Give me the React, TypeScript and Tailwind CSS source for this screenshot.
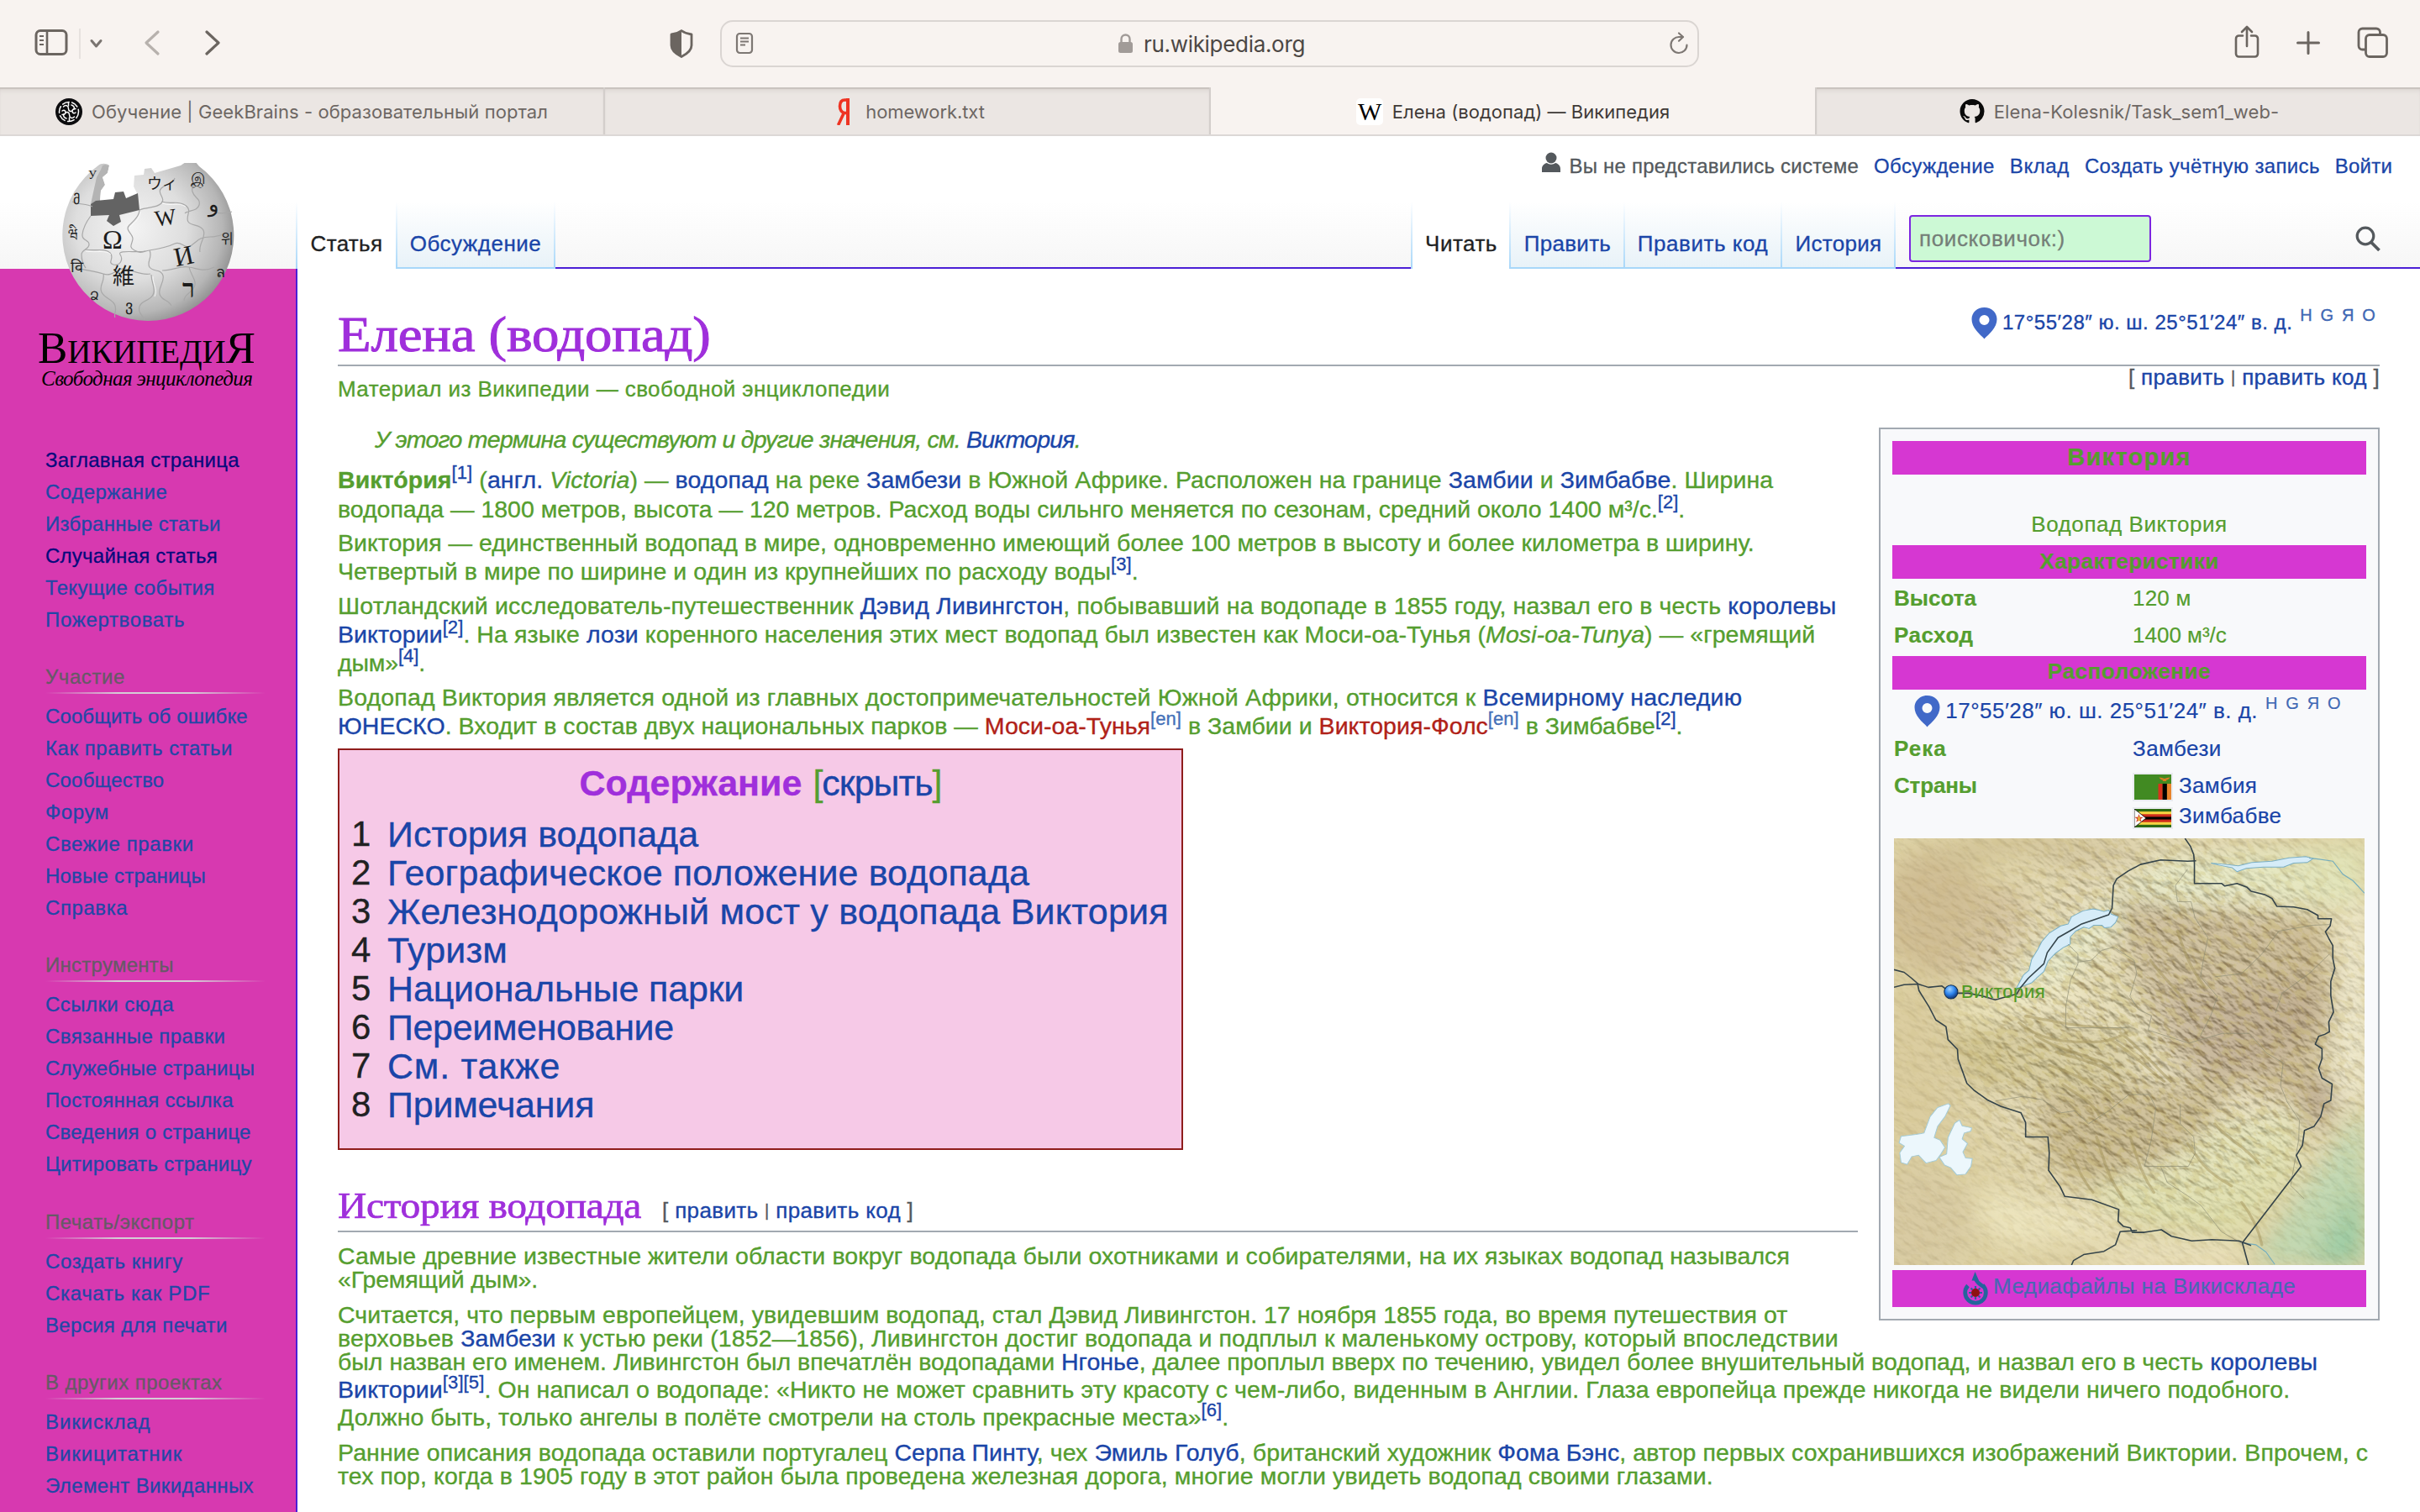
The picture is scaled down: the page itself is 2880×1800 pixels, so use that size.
import React, { useLayoutEffect, useRef } from "react";

/* Text run that spreads its letters so that it takes exactly `w` pixels. */
function Fit({ w, className = "", children }: { w: number; className?: string; children: React.ReactNode }) {
  const ref = useRef<HTMLSpanElement>(null);
  useLayoutEffect(() => {
    const el = ref.current;
    if (!el) return;
    el.style.letterSpacing = "0px";
    const natural = el.offsetWidth;
    const n = (el.textContent || " ").length;
    el.style.letterSpacing = (w - natural) / n + "px";
  }, [w]);
  return (
    <span ref={ref} className={"inline-block whitespace-pre align-top " + className}>
      {children}
    </span>
  );
}

const A = ({ children }: { children: React.ReactNode }) => <a className="text-[#1a45a8]">{children}</a>;
const Red = ({ children }: { children: React.ReactNode }) => <a className="text-[#b02118]">{children}</a>;
const Sup = ({ children }: { children: React.ReactNode }) => (
  <sup className="relative -top-[0.5em] text-[22px] text-[#1a45a8] align-baseline leading-[0]">{children}</sup>
);
const SupEn = () => (
  <sup className="relative -top-[0.5em] text-[22px] text-[#4470b8] align-baseline leading-[0]">[en]</sup>
);

function L({ w, children }: { w: number; children: React.ReactNode }) {
  return (
    <div className="whitespace-nowrap">
      <Fit w={w}>{children}</Fit>
    </div>
  );
}

/* ---------- browser chrome ---------- */

function Toolbar() {
  return (
    <div className="flex h-[104px] items-center bg-[#f8f3f0]">
      <svg className="ml-[40px] mt-[-2px] h-[36px] w-[42px] shrink-0" viewBox="0 0 42 36" fill="none" stroke="#6b6560" strokeWidth="3">
        <rect x="3" y="3.5" width="36" height="28" rx="5" />
        <path d="M16 4v27" strokeWidth="2.6" />
        <path d="M7 10h5M7 15h5M7 20h5" strokeWidth="2.2" />
      </svg>
      <div className="ml-[12px] h-[36px] w-[2px] bg-[#e6e1de]" />
      <svg className="ml-[9px] h-[16px] w-[20px]" viewBox="0 0 20 16" fill="none" stroke="#7a7470" strokeWidth="3" strokeLinecap="round" strokeLinejoin="round">
        <path d="M4 4.5l5.5 6.5L15 4.5" />
      </svg>
      <svg className="ml-[44px] mt-[-2px] h-[36px] w-[24px]" viewBox="0 0 24 36" fill="none" stroke="#b7b1ad" strokeWidth="3.2" strokeLinecap="round" strokeLinejoin="round">
        <path d="M19 5L5 18l14 13" />
      </svg>
      <svg className="ml-[48px] mt-[-2px] h-[36px] w-[24px]" viewBox="0 0 24 36" fill="none" stroke="#6b6560" strokeWidth="3.2" strokeLinecap="round" strokeLinejoin="round">
        <path d="M5 5l14 13L5 31" />
      </svg>
      <svg className="ml-[530px] h-[36px] w-[32px]" viewBox="0 0 32 36" fill="none">
        <path d="M16 2.5c4 3 8 4 12 4.500v13c0 6-5 10-12 13.500C9 30 4 26 4 20V7c4-.5 8-1.500 12-4.500z" stroke="#6b6560" strokeWidth="2.8" strokeLinejoin="round" />
        <path d="M16 2.500v31C9 30 4 26 4 20V7c4-.5 8-1.500 12-4.500z" fill="#6b6560" />
      </svg>
      <div className="ml-[30px] flex h-[56px] w-[1165px] items-center rounded-[15px] border-2 border-[#dad5d2]">
        <svg className="ml-[16px] h-[28px] w-[24px]" viewBox="0 0 24 28" fill="none" stroke="#7d7773" strokeWidth="2.200">
          <rect x="2" y="2" width="18" height="23" rx="3.500" />
          <path d="M6 7.500h10M6 11.500h10M6 15.500h6" strokeWidth="1.800" />
        </svg>
        <svg className="ml-[431px] h-[26px] w-[20px]" viewBox="0 0 20 26" fill="none">
          <rect x="1" y="11" width="17" height="13" rx="2.500" fill="#a19b98" />
          <path d="M4.500 12V7.500a5 5 0 0 1 10 0V12" stroke="#a19b98" strokeWidth="2.400" />
        </svg>
        <span className="ml-[11px] mt-[1px] font-['Inter'] text-[26px] leading-[32px] text-[#4c4744]">
          <Fit w={192}>ru.wikipedia.org</Fit>
        </span>
        <svg className="ml-[432px] h-[30px] w-[26px]" viewBox="0 0 26 30" fill="none" stroke="#7d7773" strokeWidth="2.200" strokeLinecap="round" strokeLinejoin="round">
          <path d="M22.500 16.500a9.500 9.500 0 1 1-9-9.500h4" />
          <path d="M13 2.500l5 4.500-5 4.700" />
        </svg>
      </div>
      <svg className="ml-[634px] mt-[-4px] h-[42px] w-[36px]" viewBox="0 0 36 42" fill="none" stroke="#6b6560" strokeWidth="2.600" strokeLinecap="round" strokeLinejoin="round">
        <path d="M13 13.500H8.500a3.500 3.500 0 0 0-3.500 3.500v18a3.500 3.500 0 0 0 3.500 3.500h19a3.500 3.500 0 0 0 3.500-3.500V17a3.500 3.500 0 0 0-3.500-3.500H23" />
        <path d="M18 26V3.500M12 9l6-6 6 6" />
      </svg>
      <svg className="ml-[39px] mt-[-2px] h-[32px] w-[32px]" viewBox="0 0 32 32" stroke="#6b6560" strokeWidth="3" strokeLinecap="round">
        <path d="M16 3.500v25M3.500 16h25" />
      </svg>
      <svg className="ml-[40px] mt-[-2px] h-[40px] w-[42px]" viewBox="0 0 42 40" fill="none" stroke="#6b6560" strokeWidth="2.800" strokeLinejoin="round">
        <rect x="12.500" y="10.500" width="25" height="26" rx="4.500" />
        <path d="M12 28H8.500A4.500 4.500 0 0 1 4 23.500V7.500A4.500 4.500 0 0 1 8.500 3H25a4.500 4.500 0 0 1 4.500 4.500V10" />
      </svg>
    </div>
  );
}

function Tab({ icon, label, w, box, active }: { icon: React.ReactNode; label: string; w: number; box: string; active?: boolean }) {
  return (
    <div
      className={
        "flex h-[56px] shrink-0 items-center justify-center gap-[11px] pt-[2px] font-['Inter'] text-[22px] leading-[30px] " +
        box +
        (active ? " bg-[#f8f3f0] text-[#3f3a37]" : " bg-[#ebe6e3] text-[#6d6763] shadow-[inset_0_2px_1px_#c8c2be,inset_0_7px_6px_-4px_#d8d2ce]")
      }
    >
      {icon}
      <Fit w={w}>{label}</Fit>
    </div>
  );
}

const GeekIcon = () => (
  <svg className="h-[32px] w-[32px]" viewBox="0 0 32 32" fill="none" stroke="#fff" strokeWidth="1.500" strokeLinecap="round">
    <circle cx="16" cy="16" r="16" fill="#0c0c0e" stroke="none" />
    <circle cx="16" cy="16" r="11.500" strokeDasharray="8 3.500" />
    <path d="M9.500 10c3-3 6-1 6 2.500 0 3 3 3.500 4 2.500M22.500 22c-3 3-6 1-6-2.500 0-3-3-3.500-4-2.500" />
    <path d="M8 15c2-1.500 4-.5 4 1.500s-2 3-4 3M24 17c-2 1.500-4 .5-4-1.500s2-3 4-3" />
    <path d="M19 8c3 1 4 3 3 5M13 24c-3-1-4-3-3-5M15.500 5v4M16.500 23v4" />
  </svg>
);

const YandexIcon = () => (
  <svg className="h-[32px] w-[32px]" viewBox="0 0 32 32" fill="none" stroke="#ee3423" strokeWidth="4">
    <path d="M22 0v32" />
    <path d="M22 2h-3.500c-4 0-6 3-6 7.500s2.500 8 6 8H22M17.500 17L10.500 32" strokeWidth="3.600" />
  </svg>
);

const GitHubIcon = () => (
  <svg className="ml-[2px] mt-[-1px] h-[29px] w-[30px]" viewBox="0 0 16 16" fill="#0a0a0a">
    <path d="M8 0C3.580 0 0 3.580 0 8c0 3.540 2.290 6.530 5.470 7.590.4.070.55-.17.55-.38 0-.19-.01-.82-.01-1.490-2.010.37-2.530-.49-2.690-.94-.09-.23-.48-.94-.82-1.130-.28-.15-.68-.52-.01-.53.63-.01 1.080.58 1.230.82.72 1.210 1.870.87 2.330.66.070-.52.28-.87.51-1.070-1.780-.2-3.640-.89-3.640-3.950 0-.87.31-1.590.82-2.150-.08-.2-.36-1.020.08-2.120 0 0 .67-.21 2.200.82.64-.18 1.320-.27 2-.27s1.360.09 2 .27c1.530-1.040 2.200-.82 2.200-.82.44 1.100.16 1.920.08 2.120.51.56.82 1.270.82 2.150 0 3.070-1.870 3.750-3.650 3.950.29.25.54.73.54 1.480 0 1.070-.01 1.930-.01 2.200 0 .21.15.46.55.38A8.010 8.010 0 0 0 16 8c0-4.420-3.580-8-8-8z" />
  </svg>
);

/* ---------- sidebar ---------- */

function Globe() {
  return (
    <svg className="ml-[74px] mt-[32px] block h-[189px] w-[207px]" viewBox="73 194 207 189">
      <defs>
        <radialGradient id="globe" cx="0.4" cy="0.42" r="0.65">
          <stop offset="0" stopColor="#f4f4f4" />
          <stop offset="0.5" stopColor="#dedede" />
          <stop offset="0.82" stopColor="#b6b6b6" />
          <stop offset="1" stopColor="#878787" />
        </radialGradient>
      </defs>
      <path
        d="M116 197c3-3 10-3 13 0l-2 9-6 5 3 9-5 7-1 12-11 4 28-4 2-9 9-1 2 8 14-6-4-8 1-14 11-1 1-7 8-1 4 6 31-9 9-6 8 1 5 6A102 102 0 1 1 116 197z"
        fill="url(#globe)"
      />
      <path d="M124 196l5 1-2 9-6 5 3 9-5 7-1 12-11 4 3-14 4-18 5-9 2-5z" fill="#b4b4b4" />
      <path d="M121 211l6-5 2-9 27 16 2 9 4 8-14 6-2-8-9 1-2 9-17 2 1-13 5-7z" fill="#fff" />
      <path d="M107 243l6-4 21-2 2-8 10-1 3 8 14-6 2 20-24 6 2 8-9 5-8-6 3-7-22 1z" fill="#636363" />
      <g fill="none" stroke="#a8a8a8" strokeWidth="1.200">
        <path d="M107 257c-6 8-9 14-10 22s8 6 8 12-9 6-9 12 2 12 5 16M165 250c0 8-8 14-12 18 -6 6 4 10 4 16s-6 10 2 14 8 2 18 0M165 250c10-4 20-2 26-8s-6-12 0-18 14-4 16-12" />
        <path d="M100 297c14 2 24-2 30 4s-4 12 4 14 12-6 8-12 20-2 30-4M177 298c12-2 22-4 30-8s12 8 20 2 10-10 22-10 16-4 24-6" />
        <path d="M191 240c14 4 18-2 28 4s0 14 4 20 14 2 18 10-6 16-4 26M238 206c-4 12-12 14-10 22s10 8 8 16-14 6-17 10M177 298c4 8-4 14 0 20s14 2 16 10-6 14-4 22 10 6 14 14" />
        <path d="M88 318c10 4 22 4 34 8s16-8 26-6 18 8 30 6M192 322c14 0 20-6 32-4s18 6 30 0M122 326c2 10-6 14-2 22s14 8 16 16-2 10 0 14M179 327c0 10 6 16 2 24s-14 6-16 14 4 10 6 16M224 318c2 10 10 16 6 24s-12 8-12 16M250 250c8 6 18 4 25 2M85 240c8 4 16 2 24 6" />
      </g>
      <g fill="none" stroke="#fafafa" strokeWidth="0.900">
        <path d="M101 299c14 2 24-2 30 4M166 252c0 8-8 14-12 18M192 242c14 4 18-2 28 4M181 329c0 10 6 16 2 24" />
      </g>
      <g fill="#1c1c1c" className="font-['Liberation_Serif','Noto_Sans_CJK_JP',serif]">
        <text x="121" y="296" fontSize="32">Ω</text>
        <text x="183" y="268" fontSize="27" transform="rotate(-8 196 258)">W</text>
        <text x="206" y="315" fontSize="32" transform="rotate(-12 219 304)">И</text>
        <text x="133" y="338" fontSize="26">維</text>
        <text x="174" y="225" fontSize="18">ウィ</text>
        <text x="216" y="354" fontSize="30" fontWeight="700">ר</text>
        <text x="226" y="219" fontSize="18">இ</text>
        <text x="247" y="252" fontSize="26">و</text>
        <text x="262" y="290" fontSize="16">위</text>
        <text x="80" y="284" fontSize="16">ཝི</text>
        <text x="83" y="324" fontSize="18">वि</text>
        <text x="86" y="243" fontSize="16">მ</text>
        <text x="104" y="213" fontSize="14">У</text>
        <text x="148" y="370" fontSize="18">ვ</text>
        <text x="106" y="357" fontSize="14">Ձ</text>
        <text x="256" y="330" fontSize="18">ล</text>
      </g>
    </svg>
  );
}

type Item = [string, number, boolean?];

function Menu({ title, tw = 0, items }: { title?: string; tw?: number; items: Item[] }) {
  return (
    <nav className="pl-[54px] text-[24px] [-webkit-text-stroke:0.3px_currentColor]">
      {title && (
        <div className="mt-[34.200px]">
          <div className="h-[30px] leading-[30px] text-[#665a66]">
            <Fit w={tw}>{title}</Fit>
          </div>
          <div className="mb-[8px] mt-[3px] h-[2px] w-[262px] bg-[linear-gradient(to_right,rgba(200,204,209,0),#d5cdd6_33%,#d5cdd6_66%,rgba(200,204,209,0))]" />
        </div>
      )}
      {items.map(([t, w, dark]) => (
        <div key={t} className={"h-[38px] leading-[38px] " + (dark ? "text-[#060a7c]" : "text-[#2147a6]")}>
          <Fit w={w}>{t}</Fit>
        </div>
      ))}
    </nav>
  );
}

function Sidebar() {
  return (
    <aside className="w-[352px] shrink-0 bg-[linear-gradient(to_bottom,#fff_0,#fff_78px,#f6f6f6_158px,#d739b0_158px,#d739b0_100%)]">
      <Globe />
      <div className="mt-[5px] h-[50px] pl-[45px] font-['Liberation_Serif',serif] text-[39px] leading-[52px] text-black">
        <Fit w={259}>
          <span className="text-[53px]">В</span>ИКИПЕДИ<span className="text-[53px]">Я</span>
        </Fit>
      </div>
      <div className="mt-[-3px] h-[30px] pl-[49px] font-['Liberation_Serif',serif] text-[25px] italic leading-[32px] text-black">
        <Fit w={251}>Свободная энциклопедия</Fit>
      </div>
      <div className="h-[64px]" />
      <Menu
        items={[
          ["Заглавная страница", 231, true],
          ["Содержание", 145],
          ["Избранные статьи", 209],
          ["Случайная статья", 205, true],
          ["Текущие события", 202],
          ["Пожертвовать", 166],
        ]}
      />
      <Menu
        title="Участие"
        tw={95}
        items={[
          ["Сообщить об ошибке", 241],
          ["Как править статьи", 223],
          ["Сообщество", 141],
          ["Форум", 76],
          ["Свежие правки", 177],
          ["Новые страницы", 191],
          ["Справка", 98],
        ]}
      />
      <Menu
        title="Инструменты"
        tw={153}
        items={[
          ["Ссылки сюда", 153],
          ["Связанные правки", 214],
          ["Служебные страницы", 249],
          ["Постоянная ссылка", 224],
          ["Сведения о странице", 245],
          ["Цитировать страницу", 246],
        ]}
      />
      <Menu
        title="Печать/экспорт"
        tw={177}
        items={[
          ["Создать книгу", 164],
          ["Скачать как PDF", 196],
          ["Версия для печати", 217],
        ]}
      />
      <Menu
        title="В других проектах"
        tw={210}
        items={[
          ["Викисклад", 125],
          ["Викицитатник", 163],
          ["Элемент Викиданных", 248],
        ]}
      />
    </aside>
  );
}

/* ---------- page header ---------- */

function Fade() {
  return <div className="h-full w-[2px] shrink-0 bg-[linear-gradient(to_bottom,#fff,#a7d7f9)]" />;
}

function PageTab({ label, w, box, active }: { label: string; w: number; box: string; active?: boolean }) {
  return (
    <div
      className={
        "flex h-[80px] shrink-0 justify-center pt-[34px] text-[26px] leading-[32px] [-webkit-text-stroke:0.3px_currentColor] " +
        box +
        (active ? " bg-white text-[#202122]" : " border-b-2 border-[#a7d7f9] bg-[linear-gradient(to_bottom,#fff,#e8f2f8)] text-[#1a45a8]")
      }
    >
      <Fit w={w}>{label}</Fit>
    </div>
  );
}

function Header() {
  return (
    <header className="flex h-[158px] flex-col justify-between bg-[linear-gradient(to_bottom,#fff_0,#fff_78px,#f6f6f6_158px)]">
      <div className="flex h-[50px] items-start justify-end gap-[18px] pr-[33px] pt-[21px] text-[24px] leading-[30px] text-[#1a45a8] [-webkit-text-stroke:0.3px_currentColor]">
        <div className="flex gap-[9px] text-[#54595d]">
          <svg className="mt-[-3px] h-[28px] w-[24px]" viewBox="0 0 24 28" fill="#54595d">
            <circle cx="12" cy="8" r="6.500" />
            <path d="M1 25v-4c0-4 3-6.500 6-7 1.500 1.200 3 1.700 5 1.700s3.500-.5 5-1.700c3 .5 6 3 6 7v4z" />
          </svg>
          <Fit w={345}>Вы не представились системе</Fit>
        </div>
        <Fit w={144}>Обсуждение</Fit>
        <Fit w={71}>Вклад</Fit>
        <Fit w={280}>Создать учётную запись</Fit>
        <Fit w={68}>Войти</Fit>
      </div>
      <div className="flex h-[80px]">
        <Fade />
        <PageTab label="Статья" w={86} box="w-[117px]" active />
        <Fade />
        <PageTab label="Обсуждение" w={156} box="w-[186px]" />
        <Fade />
        <div className="flex-1 border-b-2 border-[#4b1fd6]" />
        <Fade />
        <PageTab label="Читать" w={86} box="w-[115px] pl-[1px]" active />
        <Fade />
        <PageTab label="Править" w={103} box="w-[134px] pl-[1px]" />
        <Fade />
        <PageTab label="Править код" w={155} box="w-[185px]" />
        <Fade />
        <PageTab label="История" w={103} box="w-[133px] pl-[1px]" />
        <Fade />
        <div className="flex w-[624px] shrink-0 justify-between border-b-2 border-[#4b1fd6] pl-[16px] pr-[46px] pt-[16px]">
          <div className="h-[56px] w-[288px] rounded-[4px] border-2 border-[#7c25e0] bg-[#ccf9d5] pl-[10px] text-[26px] leading-[52px] text-[#757f78] [-webkit-text-stroke:0.3px_currentColor]">
            <Fit w={174}>поисковичок:)</Fit>
          </div>
          <svg className="mt-[12px] h-[34px] w-[32px]" viewBox="0 0 32 34" fill="none" stroke="#54595d" strokeWidth="3.200">
            <circle cx="13" cy="13" r="9.800" />
            <path d="M20 20.500l9.500 9.500" strokeWidth="3.800" />
          </svg>
        </div>
      </div>
    </header>
  );
}

/* ---------- article pieces ---------- */

function Coords({ w, size }: { w: number; size: string }) {
  return (
    <div className={"flex h-[32px] leading-[32px] text-[#1a45a8] " + size}>
      <svg className="mt-[-2px] h-[38px] w-[31px]" viewBox="0 0 31 38">
        <path d="M15.500 0C7 0 .5 6 .5 14c0 5 2 9 5.500 13.500 4 5 7.500 7.500 9.500 10 2-2.500 5.500-5 9.500-10C28.500 23 30.500 19 30.500 14c0-8-6.500-14-15-14zm0 9a6 6 0 1 1 0 12 6 6 0 0 1 0-12z" fill="#4169c8" />
      </svg>
      <Fit w={w} className="ml-[6px]">
        17°55′28″ ю. ш. 25°51′24″ в. д.
      </Fit>
      <Fit w={92} className="ml-[9px] mt-[-9px] text-[20px] text-[#3f68b4]">
        H G Я O
      </Fit>
    </div>
  );
}

function EditLinks({ className = "" }: { className?: string }) {
  return (
    <div className={"whitespace-nowrap text-[26px] leading-[32px] text-[#54595d] " + className}>
      <Fit w={299}>
        [ <A>править</A> <span className="relative -top-[2px] text-[20px]">|</span> <A>править код</A> ]
      </Fit>
    </div>
  );
}

const toc: [string, number][] = [
  ["История водопада", 370],
  ["Географическое положение водопада", 764],
  ["Железнодорожный мост у водопада Виктория", 930],
  ["Туризм", 143],
  ["Национальные парки", 424],
  ["Переименование", 341],
  ["См. также", 206],
  ["Примечания", 246],
];

function Toc() {
  return (
    <div className="mt-[10px] h-[478px] w-[1006px] border-2 border-[#8f1d1c] bg-[#f6c9e7] px-[14px] pt-[16px] text-[43px] leading-[46.100px]">
      <div className="flex justify-center gap-[13px]">
        <Fit w={265} className="font-bold text-[#9f2fdb]">
          Содержание
        </Fit>
        <Fit w={153} className="text-[#559e2f]">
          [<A>скрыть</A>]
        </Fit>
      </div>
      <ol className="mt-[15px]">
        {toc.map(([t, w], i) => (
          <li key={t} className="flex h-[46.100px]">
            <span className="w-[43px] text-[42px] text-[#202122]">{i + 1}</span>
            <A>
              <Fit w={w}>{t}</Fit>
            </A>
          </li>
        ))}
      </ol>
    </div>
  );
}

function ReliefMap() {
  return (
    <div className="relative h-[508px] w-[560px] overflow-hidden">
      <svg className="block h-[508px] w-[560px]" viewBox="60 46 1394 1306" preserveAspectRatio="none">
        <defs>
          <filter id="soft" x="-30%" y="-30%" width="160%" height="160%">
            <feGaussianBlur stdDeviation="34" />
          </filter>
          <filter id="relief" x="0" y="0" width="100%" height="100%" colorInterpolationFilters="sRGB">
            <feTurbulence type="fractalNoise" baseFrequency="0.022 0.045" numOctaves="5" seed="11" result="n" />
            <feDiffuseLighting in="n" surfaceScale="9" diffuseConstant="1.150" lightingColor="#ffffff">
              <feDistantLight azimuth="250" elevation="52" />
            </feDiffuseLighting>
          </filter>
          <filter id="grain" x="0" y="0" width="100%" height="100%" colorInterpolationFilters="sRGB">
            <feTurbulence type="fractalNoise" baseFrequency="0.03 0.05" numOctaves="5" seed="5" />
            <feColorMatrix values="0 0 0 0 0.62  0 0 0 0 0.52  0 0 0 0 0.3  7 0 0 0 -3.4" />
          </filter>
          <radialGradient id="fadeMask" gradientUnits="userSpaceOnUse" cx="860" cy="620" r="720">
            <stop offset="0" stopColor="#fff" />
            <stop offset="0.6" stopColor="#ccc" />
            <stop offset="1" stopColor="#333" />
          </radialGradient>
          <mask id="highland" maskUnits="userSpaceOnUse" x="60" y="46" width="1394" height="1306">
            <rect x="60" y="46" width="1394" height="1306" fill="url(#fadeMask)" />
          </mask>
          <radialGradient id="dot" cx="0.4" cy="0.3" r="0.75">
            <stop offset="0" stopColor="#9fd2ff" />
            <stop offset="0.5" stopColor="#2f86ee" />
            <stop offset="1" stopColor="#0c2a66" />
          </radialGradient>
        </defs>
        <rect x="60" y="46" width="1394" height="1306" fill="#dccf9f" />
        <g filter="url(#soft)">
          <ellipse cx="230" cy="270" rx="220" ry="200" fill="#cdb98c" />
          <ellipse cx="500" cy="90" rx="300" ry="60" fill="#cfbf90" />
          <ellipse cx="420" cy="150" rx="130" ry="50" fill="#ddd0a0" />
          <ellipse cx="130" cy="760" rx="130" ry="280" fill="#d8c998" />
          <ellipse cx="130" cy="1220" rx="160" ry="170" fill="#d6c79c" />
          <path d="M420 470L720 210L860 110L1454 60L1454 260L1000 240L720 330L480 560z" fill="#e0e2b2" />
          <path d="M720 220L1000 260L1320 300L1350 480L1340 640L1280 860L1100 800L860 720L760 440z" fill="#b9a36f" />
          <path d="M860 520L1300 480L1340 600L1180 740L980 800z" fill="#a88e64" />
          <path d="M1300 760L1370 820L1320 940L1270 900z" fill="#a38a68" />
          <path d="M600 440L740 380L800 600L860 700L760 740L620 560z" fill="#d8cb92" />
          <path d="M200 560L430 500L600 470L620 560L300 620z" fill="#e6dca6" />
          <path d="M220 640L520 600L760 660L780 820L460 820L290 790z" fill="#c7b878" />
          <path d="M480 830L1060 780L1000 920L880 1020L640 1100L520 1020z" fill="#b7a267" />
          <path d="M620 1120L860 1050L1020 920L1250 880L1260 1080L1090 1270L780 1230z" fill="#dad99f" />
          <path d="M1390 250L1454 240L1454 800L1380 900L1390 640z" fill="#f0eacb" />
          <path d="M1290 1090L1454 860L1454 1352L1120 1352z" fill="#bdd5ac" />
          <path d="M1454 1080L1454 1352L1290 1352z" fill="#97c99f" />
          <path d="M700 1290L1080 1290L1100 1352L620 1352z" fill="#ece2bb" />
          <path d="M330 1110L560 1170L720 1200L700 1260L400 1300L300 1200z" fill="#ebe2b8" />
        </g>
        <g mask="url(#highland)">
          <g transform="rotate(38 757 699)">
            <rect x="-260" y="-320" width="2040" height="2040" filter="url(#grain)" opacity="0.350" />
            <rect x="-260" y="-320" width="2040" height="2040" filter="url(#relief)" opacity="0.400" className="mix-blend-overlay" />
          </g>
        </g>
        <g fill="none" stroke="#a3935c" strokeWidth="8" opacity="0.500" strokeLinecap="round">
          <path d="M430 610c60 50 120 60 200 60s100-20 120-30M450 590c60 10 120 30 280 40M480 650c60 40 120 50 220 90M540 700c60 20 130 30 200 90M520 740c80 30 140 60 190 110M560 800c40 30 90 50 110 100M700 660c50 30 100 80 160 130M730 640c60 50 100 100 150 150M820 420c40 60 90 90 120 170M900 330c20 60 30 100 80 170M580 1000c20 40 30 80 70 130M660 960c20 60 30 120 80 190M760 960c20 60 30 110 70 170M1010 920c40 50 80 60 130 120M930 980c40 60 60 90 130 130M1090 1160c30 40 50 80 60 130" />
        </g>
        <g fill="#d6ecf8" stroke="#7cb0c4" strokeWidth="2.500" strokeLinejoin="round">
          <path d="M422 506l22-42 16-14 8-34 18-30 12-24 22-26 34-22 22-6 10-22 34-18 30-6 18 4 14 4 14-4 8 12 20 8-8 18-14 14-18 2-8-8-24 0-14 10-16-4-24 12-16 18 0 22-20 10-24 18-22 24-12 32-22 20-14 14z" />
          <path d="M1000 122l44 4 36 4 40-10 60-4 50-10 50-4 22 6-18 12-40 2-30 12-60 0-50 4-28 10-14-12-40-8z" />
          <path d="M221 858l6 6-16 34-22 30-10 34 18 8 14 22-12 20-14 20-30 8-22-24-20 4-14 24-18-6-4-30 14-20-16-10 6-20 44-6 24-4 18-50 22-28z" stroke="#a4cbd6" fill="#ecf7fc" />
          <path d="M240 918l14-10 8 18 28 6-2 10-20 6-6 18 16 14-14 26 8 18 20 2-4 24-16 24-26 2-18-22-18-8-16-24 22-10 4-50z" stroke="#a4cbd6" fill="#ecf7fc" />
        </g>
        <g fill="none" stroke="#77aebc" strokeWidth="3">
          <path d="M1290 106l30 4 40 6 30 40 30 20 34 38M1092 1284l40 6 30 22 26 38" />
        </g>
        <g fill="none" stroke="#8b8a72" strokeWidth="2" opacity="0.800">
          <path d="M575 370l30 30v30l-22 50-14 80v66h180M605 425l40-6 30-30 36-10 60 40 8 40-20 70 24 40 40 20-10 44 120 40 100-30 80 0 50 60 50 30-8 70 20 50 36 56-2 60-14 80-10 60 40 40M930 140l-36 50 6 50 40 0 12 50 38 60-12 60-10 60 50 60-20 60-30 60M1010 470l80-10 60-60 50-70 100-18 50-2M1350 400l-60 60-80 60-20 60M360 850l80-14 60 10 56 40 40-6 40 40 60-40 60-50 60 0 20 40-14 100-20 80h130l20-40-4-50-40-40 0-60M850 1050l20 50 60 40 40 30 60 80 60 36" />
        </g>
        <g fill="none" stroke="#35444a" strokeWidth="4" strokeLinejoin="round">
          <path d="M60 448l30 8 22 18 20 18 30 10 40-4 28 22 50 0 40 8 40 12 36-10 28-8 10-18 24-30 46-44 10-34 32-46 34-20 36-22 80-28 10-20 4-70 10-20 34-24 36-20 60-14 80 4 25-1" />
          <path d="M922 46l16 24 10 26 2 26v62h80l10 8 36-8 30 12 12 12 40 10 22 12 14 24 50 2 40 8 32 18v10h40l-4 22-14 18 10 20 12 22v40l6 30-12 40 0 44 8 50-14 30 2 30-14 8-18 6-10 24 20 14 0 30-10 30 10 30 30 18-4 50-20 10-10 40-20 30-28 12-6 46-18 30 14 34L1092 1284l18 68" />
          <path d="M60 502l30-8 40-2 4 20 30 50 20 40 30 20 6 40 28 30 2 30 26 74 20 20 40 30 40 20 60 20 14 30 0 44h66l4 48-2 54 34 50 14 30 80 10 80 30-2 36 16 16 20 4 6 14 36 0 50-8 30 20 60 14 60-4 80 4 36 14M780 1246l-50 4-14 40-34 20-60 10-30 18-6 14" />
        </g>
        <ellipse cx="229" cy="516" rx="20" ry="21" fill="url(#dot)" stroke="#0d2c52" strokeWidth="2.500" />
      </svg>
      <div className="absolute left-[80px] top-[168px] text-[22px] leading-[30px] text-[#4f9a25]">
        <Fit w={100}>Виктория</Fit>
      </div>
    </div>
  );
}

const CommonsIcon = () => (
  <svg className="h-[42px] w-[30px]" viewBox="0 0 30 42" fill="none">
    <path d="M6 17.500A12.300 12.300 0 1 0 23.500 17" stroke="#24659c" strokeWidth="4.800" />
    <path d="M24.500 19C19 15 16 13 14.500 8" stroke="#24659c" strokeWidth="4.500" />
    <path d="M14.500 1l4.500 10.500h-8.500z" fill="#24659c" />
    <path d="M15 18v3M15 31v3M7 26h3M20 26h3M9.500 20.500l2 2M18.500 29.500l2 2M20.500 20.500l-2 2M11.500 29.500l-2 2" stroke="#24659c" strokeWidth="2.200" />
    <circle cx="15" cy="26" r="5" fill="#8f1012" />
  </svg>
);

const Zambia = () => (
  <svg className="h-[30px] w-[44px] outline-2 outline-[#eaecf0]" viewBox="0 0 44 30">
    <rect width="44" height="30" fill="#418a22" />
    <rect x="28.500" y="11" width="5.200" height="19" fill="#d8331c" />
    <rect x="33.700" y="11" width="5.200" height="19" fill="#000" />
    <rect x="38.900" y="11" width="5.100" height="19" fill="#e8842b" />
    <path d="M29.500 3.500c3 0 4 1 6.500 1.500 2.500-.5 3.500-1.500 6.500-1.500-1 2-3 3-5 3.200l1 1.300h-5l1-1.300c-2-.2-4-1.200-5-3.200z" fill="#dd7f25" />
  </svg>
);

const Zimbabwe = () => (
  <svg className="h-[22px] w-[44px] outline-2 outline-[#eaecf0]" viewBox="0 0 44 22">
    <rect width="44" height="22" fill="#2d6a12" />
    <rect y="3.140" width="44" height="15.700" fill="#f6d242" />
    <rect y="6.280" width="44" height="9.430" fill="#ce2b1b" />
    <rect y="9.430" width="44" height="3.140" fill="#000" />
    <path d="M0 0l14 11L0 22z" fill="#fff" stroke="#000" strokeWidth="0.800" />
    <path d="M5.500 6l1.300 3.700h3.900l-3.100 2.300 1.200 3.800-3.300-2.300-3.300 2.300 1.200-3.800L.3 9.700h3.900z" fill="#d5402a" />
    <path d="M5 8.500l2 2-.5 4H4.500l-.3-4z" fill="#e8b73a" />
  </svg>
);

function Bar({ children, w, className = "" }: { children: string; w: number; className?: string }) {
  return (
    <div className={"flex h-[40px] justify-center bg-[#d637d2] font-bold " + className}>
      <Fit w={w}>{children}</Fit>
    </div>
  );
}

function Row({ label, lw, children, className = "" }: { label: string; lw: number; children: React.ReactNode; className?: string }) {
  return (
    <div className={"flex pl-[2px] leading-[32px] " + className}>
      <div className="w-[284px] font-bold">
        <Fit w={lw}>{label}</Fit>
      </div>
      <div>{children}</div>
    </div>
  );
}

function Infobox() {
  return (
    <div className="float-right mr-[48px] mt-[3px] h-[1063px] w-[596px] border-2 border-[#a2a9b1] bg-[#f8f9fb] px-[14px] pt-[14px] text-[26px] [-webkit-text-stroke:0.2px_currentColor]">
      <Bar w={147} className="text-[29px] leading-[39px]">
        Виктория
      </Bar>
      <div className="mt-[43px] flex h-[41px] justify-center leading-[32px]">
        <Fit w={233}>Водопад Виктория</Fit>
      </div>
      <Bar w={213} className="leading-[38px]">
        Характеристики
      </Bar>
      <Row label="Высота" lw={98} className="mt-[7px] h-[44px]">
        <Fit w={69}>120 м</Fit>
      </Row>
      <Row label="Расход" lw={94} className="h-[41px]">
        <Fit w={112}>1400 м³/с</Fit>
      </Row>
      <Bar w={194} className="leading-[37px]">
        Расположение
      </Bar>
      <div className="flex h-[54px] justify-center pr-[2px] pt-[9px]">
        <Coords w={372} size="text-[26px]" />
      </div>
      <Row label="Река" lw={63} className="h-[44px]">
        <A>
          <Fit w={106}>Замбези</Fit>
        </A>
      </Row>
      <Row label="Страны" lw={99} className="h-[79px]">
        <div className="flex gap-[9px] pl-[2px]">
          <div className="pt-[3px]">
            <Zambia />
          </div>
          <A>
            <Fit w={93}>Замбия</Fit>
          </A>
        </div>
        <div className="mt-[3px] flex gap-[9px] pl-[2px]">
          <div className="pt-[8px]">
            <Zimbabwe />
          </div>
          <A>
            <Fit w={122}>Зимбабве</Fit>
          </A>
        </div>
      </Row>
      <div className="ml-[2px]">
        <ReliefMap />
      </div>
      <div className="mt-[6px] flex h-[44px] gap-[6px] bg-[#d637d2] pl-[84px] pt-[1px] leading-[36px] text-[#4769b2]">
        <CommonsIcon />
        <Fit w={360}>Медиафайлы на Викискладе</Fit>
      </div>
    </div>
  );
}

function Article() {
  return (
    <article className="pl-[48px] text-[28.500px] text-[#559e2f] [-webkit-text-stroke:0.350px_currentColor]">
      <div className="mr-[48px] flex h-[116px] items-end justify-between border-b-2 border-[#a2a9b1]">
        <h1 className="origin-left scale-x-[1.08] font-['Liberation_Serif',serif] text-[60px] leading-[72px] text-[#9f2fdb] [-webkit-text-stroke:1px_#9f2fdb]">
          <Fit w={411}>Елена (водопад)</Fit>
        </h1>
        <div className="mb-[34px] mr-[3px]">
          <Coords w={345} size="text-[24px]" />
        </div>
      </div>
      <div className="mr-[48px] flex h-[70px] justify-between">
        <div className="mt-[11px] text-[26px] leading-[32px]">
          <Fit w={657}>Материал из Википедии — свободной энциклопедии</Fit>
        </div>
        <EditLinks className="mt-[-3px]" />
      </div>
      <Infobox />
      <div className="pl-[44px] italic leading-[35px]">
        <L w={840}>
          У этого термина существуют и другие значения, см. <A>Виктория</A>.
        </L>
      </div>
      <div className="mt-[13px] leading-[34.500px]">
        <L w={1708}>
          <b>Викто́рия</b>
          <Sup>[1]</Sup> (<A>англ.</A> <i>Victoria</i>) — <A>водопад</A> на реке <A>Замбези</A> в Южной Африке. Расположен на границе <A>Замбии</A> и <A>Зимбабве</A>. Ширина
        </L>
        <L w={1603}>
          водопада — 1800 метров, высота — 120 метров. Расход воды сильнго меняется по сезонам, средний около 1400 м³/с.<Sup>[2]</Sup>.
        </L>
      </div>
      <div className="mt-[5.500px] leading-[34px]">
        <L w={1686}>Виктория — единственный водопад в мире, одновременно имеющий более 100 метров в высоту и более километра в ширину.</L>
        <L w={953}>
          Четвертый в мире по ширине и один из крупнейших по расходу воды<Sup>[3]</Sup>.
        </L>
      </div>
      <div className="mt-[7px] leading-[34px]">
        <L w={1783}>
          Шотландский исследователь-путешественник <A>Дэвид Ливингстон</A>, побывавший на водопаде в 1855 году, назвал его в честь <A>королевы</A>
        </L>
        <L w={1758}>
          <A>Виктории</A>
          <Sup>[2]</Sup>. На языке <A>лози</A> коренного населения этих мест водопад был известен как Моси-оа-Тунья (<i>Mosi-oa-Tunya</i>) — «гремящий
        </L>
        <L w={104}>
          дым»<Sup>[4]</Sup>.
        </L>
      </div>
      <div className="mt-[7px] leading-[34px]">
        <L w={1671}>
          Водопад Виктория является одной из главных достопримечательностей Южной Африки, относится к <A>Всемирному наследию</A>
        </L>
        <L w={1601}>
          <A>ЮНЕСКО</A>. Входит в состав двух национальных парков — <Red>Моси-оа-Тунья</Red>
          <SupEn /> в Замбии и <Red>Виктория-Фолс</Red>
          <SupEn /> в Зимбабве<Sup>[2]</Sup>.
        </L>
      </div>
      <Toc />
      <div className="mt-[41px] flex h-[57px] w-[1809px] border-b-2 border-[#a2a9b1]">
        <h2 className="w-[361px] origin-left scale-x-[1.08] font-['Liberation_Serif',serif] text-[44px] leading-[52px] text-[#9f2fdb] [-webkit-text-stroke:0.700px_#9f2fdb]">
          <Fit w={334}>История водопада</Fit>
        </h2>
        <EditLinks className="ml-[25px] mt-[15px]" />
      </div>
      <div className="mt-[14px] leading-[28px]">
        <L w={1728}>Самые древние известные жители области вокруг водопада были охотниками и собирателями, на их языках водопад назывался</L>
        <L w={238}>«Гремящий дым».</L>
      </div>
      <div className="mt-[14px] leading-[28px]">
        <L w={1725}>Считается, что первым европейцем, увидевшим водопад, стал Дэвид Ливингстон. 17 ноября 1855 года, во время путешествия от</L>
        <L w={1786}>
          верховьев <A>Замбези</A> к устью реки (1852—1856), Ливингстон достиг водопада и подплыл к маленькому острову, который впоследствии
        </L>
        <L w={2356}>
          был назван его именем. Ливингстон был впечатлён водопадами <A>Нгонье</A>, далее проплыл вверх по течению, увидел более внушительный водопад, и назвал его в честь <A>королевы</A>
        </L>
      </div>
      <div className="mt-[3px] leading-[33px]">
        <L w={2323}>
          <A>Виктории</A>
          <Sup>[3][5]</Sup>. Он написал о водопаде: «Никто не может сравнить эту красоту с чем-либо, виденным в Англии. Глаза европейца прежде никогда не видели ничего подобного.
        </L>
        <L w={1060}>
          Должно быть, только ангелы в полёте смотрели на столь прекрасные места»<Sup>[6]</Sup>.
        </L>
      </div>
      <div className="mt-[11px] leading-[28px]">
        <L w={2416}>
          Ранние описания водопада оставили португалец <A>Серпа Пинту</A>, чех <A>Эмиль Голуб</A>, британский художник <A>Фома Бэнс</A>, автор первых сохранившихся изображений Виктории. Впрочем, с
        </L>
        <L w={1637}>тех пор, когда в 1905 году в этот район была проведена железная дорога, многие могли увидеть водопад своими глазами.</L>
      </div>
    </article>
  );
}

export default function App() {
  return (
    <div className="h-[1800px] w-[2880px] overflow-hidden bg-white font-['Liberation_Sans',Arial,sans-serif]">
      <Toolbar />
      <div className="flex border-b-2 border-[#dcd8d6]">
        <Tab icon={<GeekIcon />} label="Обучение | GeekBrains - образовательный портал" w={543} box="w-[720px] border-r-2 border-[#d3cecb]" />
        <Tab icon={<YandexIcon />} label="homework.txt" w={142} box="w-[721px] border-r-2 border-[#d3cecb]" />
        <Tab
          icon={<span className="flex h-[32px] w-[32px] items-center justify-center rounded-[5px] bg-white font-['Liberation_Serif',serif] text-[30px] tracking-[-1px] text-black">W</span>}
          label="Елена (водопад) — Википедия"
          w={331}
          box="w-[721px] border-r-2 border-[#d3cecb]"
          active
        />
        <Tab icon={<GitHubIcon />} label="Elena-Kolesnik/Task_sem1_web-" w={340} box="w-[718px]" />
      </div>
      <div className="flex h-[1638px]">
        <Sidebar />
        <main className="min-w-0 flex-1">
          <Header />
          <div className="h-[1480px] border-l-2 border-[#4b1fd6]">
            <Article />
          </div>
        </main>
      </div>
    </div>
  );
}
